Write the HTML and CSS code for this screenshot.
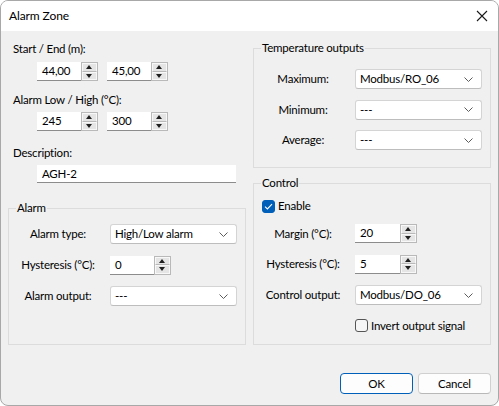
FILE: index.html
```html
<!DOCTYPE html>
<html>
<head>
<meta charset="utf-8">
<link rel="stylesheet" href="styles.css">
</head>
<body>
<div class="window">
  <div class="titlebar">
    <span class="title">Alarm Zone</span>
    <svg class="close" width="12" height="12" viewBox="0 0 12 12"><path d="M1 1 L11 11 M11 1 L1 11" stroke="#1a1a1a" stroke-width="1.1" fill="none"/></svg>
  </div>
  <div class="content">
    <div class="cols">
      <div class="col left">
        <div class="lbl l1">Start / End (m):</div>
        <div class="spins s1">
          <div class="spin"><span class="spin-val">44,00</span><span class="spin-btns"><span class="sb up"></span><span class="sb down"></span></span></div>
          <div class="spin"><span class="spin-val">45,00</span><span class="spin-btns"><span class="sb up"></span><span class="sb down"></span></span></div>
        </div>
        <div class="lbl l2">Alarm Low / High (°C):</div>
        <div class="spins s2">
          <div class="spin"><span class="spin-val">245</span><span class="spin-btns"><span class="sb up"></span><span class="sb down"></span></span></div>
          <div class="spin"><span class="spin-val">300</span><span class="spin-btns"><span class="sb up"></span><span class="sb down"></span></span></div>
        </div>
        <div class="lbl l3">Description:</div>
        <div class="text-input">AGH-2</div>
        <div class="group alarm grow">
          <div class="group-title">Alarm</div>
          <div class="form">
            <div class="flbl">Alarm type:</div>
            <div class="combo"><span>High/Low alarm</span><svg class="chev" width="9" height="5" viewBox="0 0 9 5"><path d="M0.5 0.5 L4.5 4.5 L8.5 0.5" stroke="#5c5c5c" stroke-width="1" fill="none"/></svg></div>
            <div class="flbl">Hysteresis (°C):</div>
            <div class="spin"><span class="spin-val">0</span><span class="spin-btns"><span class="sb up"></span><span class="sb down"></span></span></div>
            <div class="flbl">Alarm output:</div>
            <div class="combo"><span>---</span><svg class="chev" width="9" height="5" viewBox="0 0 9 5"><path d="M0.5 0.5 L4.5 4.5 L8.5 0.5" stroke="#5c5c5c" stroke-width="1" fill="none"/></svg></div>
          </div>
        </div>
      </div>
      <div class="col right">
        <div class="group temp">
          <div class="group-title">Temperature outputs</div>
          <div class="form">
            <div class="flbl">Maximum:</div>
            <div class="combo"><span>Modbus/RO_06</span><svg class="chev" width="9" height="5" viewBox="0 0 9 5"><path d="M0.5 0.5 L4.5 4.5 L8.5 0.5" stroke="#5c5c5c" stroke-width="1" fill="none"/></svg></div>
            <div class="flbl">Minimum:</div>
            <div class="combo"><span>---</span><svg class="chev" width="9" height="5" viewBox="0 0 9 5"><path d="M0.5 0.5 L4.5 4.5 L8.5 0.5" stroke="#5c5c5c" stroke-width="1" fill="none"/></svg></div>
            <div class="flbl">Average:</div>
            <div class="combo"><span>---</span><svg class="chev" width="9" height="5" viewBox="0 0 9 5"><path d="M0.5 0.5 L4.5 4.5 L8.5 0.5" stroke="#5c5c5c" stroke-width="1" fill="none"/></svg></div>
          </div>
        </div>
        <div class="group control grow">
          <div class="group-title">Control</div>
          <div class="check-row">
            <span class="cb checked"><svg width="9" height="7" viewBox="0 0 9 7"><path d="M1 3.6 L3.4 6 L8 1.2" stroke="#ffffff" stroke-width="1.1" fill="none"/></svg></span>
            <span>Enable</span>
          </div>
          <div class="form">
            <div class="flbl">Margin (°C):</div>
            <div class="spin wide"><span class="spin-val">20</span><span class="spin-btns"><span class="sb up"></span><span class="sb down"></span></span></div>
            <div class="flbl">Hysteresis (°C):</div>
            <div class="spin wide"><span class="spin-val">5</span><span class="spin-btns"><span class="sb up"></span><span class="sb down"></span></span></div>
            <div class="flbl">Control output:</div>
            <div class="combo"><span>Modbus/DO_06</span><svg class="chev" width="9" height="5" viewBox="0 0 9 5"><path d="M0.5 0.5 L4.5 4.5 L8.5 0.5" stroke="#5c5c5c" stroke-width="1" fill="none"/></svg></div>
            <div></div>
            <div class="check-row invert"><span class="cb"></span><span>Invert output signal</span></div>
          </div>
        </div>
      </div>
    </div>
    <div class="buttons">
      <div class="btn default">OK</div>
      <div class="btn">Cancel</div>
    </div>
  </div>
</div>
</body>
</html>
```

FILE: styles.css
```css
* { box-sizing: border-box; }
html, body { margin: 0; padding: 0; background: #ffffff; }
body {
  font-family: Lato, "Noto Sans", sans-serif;
  font-size: 11.5px;
  letter-spacing: -0.2px;
  line-height: 16px;
  color: #000000;
}
.window {
  width: 499px;
  height: 406px;
  border: 1px solid #a8a8a8;
  border-radius: 8px;
  overflow: hidden;
  background: #f0f0f0;
  display: flex;
  flex-direction: column;
}
.titlebar {
  flex: 0 0 30px;
  height: 30px;
  background: #ffffff;
  display: flex;
  align-items: center;
  justify-content: space-between;
  padding: 0 10px 0 8px;
}
.title { font-size: 12px; letter-spacing: -0.1px; }
.close { display: block; }
.content {
  flex: 1;
  display: flex;
  flex-direction: column;
  padding: 0 7px 0 7px;
}
.cols {
  display: grid;
  grid-template-columns: 238px 238px;
  column-gap: 7px;
}
.col { display: flex; flex-direction: column; }
.lbl { padding-left: 5px; }
.l1 { margin-top: 10px; }
.s1 { margin-top: 5px; }
.l2 { margin-top: 11px; }
.s2 { margin-top: 4px; }
.l3 { margin-top: 14px; }
.spins {
  display: flex;
  gap: 9px;
  padding-left: 29px;
}
.spin {
  display: flex;
  width: 61px;
  height: 19px;
}
.spin.wide { width: 62px; }
.spin-val {
  flex: 1;
  background: #ffffff;
  border-bottom: 1px solid #8c8c8c;
  padding-left: 5px;
  line-height: 18px;
}
.spin-btns {
  width: 17px;
  border: 1px solid #b9b9b9;
  display: flex;
  flex-direction: column;
  background: #e9e9e9;
}
.sb {
  flex: 1;
  position: relative;
  border: 1px solid #f8f8f8;
  background: #e5e5e5;
}
.sb.up { border-bottom-color: #b9b9b9; }
.sb::after {
  content: "";
  position: absolute;
  left: 50%;
  top: 50%;
  margin-left: -3.5px;
  width: 0;
  height: 0;
  border-left: 3.5px solid transparent;
  border-right: 3.5px solid transparent;
}
.sb.up::after { border-bottom: 4px solid #202020; margin-top: -2px; }
.sb.down::after { border-top: 4px solid #202020; margin-top: -2px; }
.text-input {
  margin: 4px 0 0 29px;
  width: 199px;
  height: 18px;
  background: #ffffff;
  border-bottom: 1px solid #8c8c8c;
  padding-left: 5px;
  line-height: 17px;
}
.group {
  border: 1px solid #dcdcdc;
}
.grow { flex: 1; }
.group-title {
  margin: -9px 0 0 7px;
  padding: 0 1px;
  background: #f0f0f0;
  display: table;
}
.alarm { margin-top: 25px; }
.temp { margin-top: 17px; padding-bottom: 17px; }
.control { margin-top: 15px; padding-bottom: 10px; }
.form {
  display: grid;
  grid-template-columns: 101px 127px;
  align-items: center;
}
.alarm .form { margin-top: 8px; row-gap: 11.5px; }
.temp .form { margin-top: 13px; row-gap: 10.5px; }
.control .form { margin-top: 10px; row-gap: 11.5px; }
.flbl {
  text-align: center;
  padding-right: 3px;
  white-space: nowrap;
}
.combo {
  height: 20px;
  background: #ffffff;
  border: 1px solid #d4d4d4;
  border-bottom-color: #bdbdbd;
  border-radius: 3px;
  display: flex;
  align-items: center;
  justify-content: space-between;
  padding: 0 8px 0 4px;
}
.chev { display: block; }
.check-row {
  display: flex;
  align-items: center;
  gap: 3px;
  white-space: nowrap;
}
.control > .check-row { margin: 7px 0 0 8px; }
.cb {
  flex: 0 0 13px;
  width: 13px;
  height: 13px;
  border-radius: 3px;
  border: 1px solid #555555;
  background: #f6f6f6;
  display: flex;
  align-items: center;
  justify-content: center;
}
.cb.checked {
  background: #005fb8;
  border-color: #005fb8;
}
.cb svg { display: block; }
.invert { margin-top: 1px; }
.buttons {
  display: flex;
  justify-content: flex-end;
  gap: 5px;
  margin-top: 28px;
}
.btn {
  width: 73px;
  height: 21px;
  border: 1px solid #d0d0d0;
  border-bottom-color: #b8b8b8;
  border-radius: 4px;
  background: #fdfdfd;
  text-align: center;
  line-height: 19px;
}
.btn.default {
  border: 1px solid #005fb8;
}
```
